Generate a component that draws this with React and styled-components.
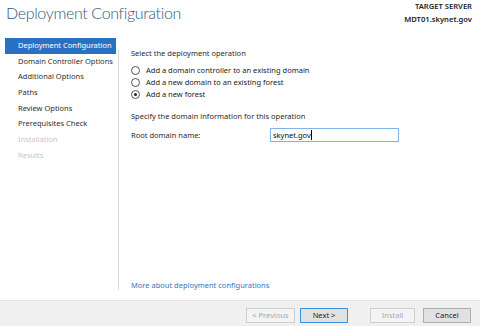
import React from 'react';
import styled, { createGlobalStyle } from 'styled-components';

const GlobalStyle = createGlobalStyle`
  html, body {
    margin: 0;
    padding: 0;
    background: #ffffff;
  }
  body {
    font-family: "Segoe UI", "Noto Sans", "Open Sans", sans-serif;
    font-size: 7.5px;
    line-height: 11px;
    color: #1f1f1f;
  }
`;

const Window = styled.div`
  width: 480px;
  height: 326px;
  display: flex;
  flex-direction: column;
  background: #ffffff;
  overflow: hidden;
`;

const Header = styled.header`
  height: 36px;
  display: flex;
  justify-content: space-between;
  align-items: flex-start;
  padding: 0 8px 0 6px;
`;

const Title = styled.h1`
  margin: 3px 0 0;
  font-family: "Lato", "Open Sans", sans-serif;
  font-weight: 300;
  font-size: 16px;
  letter-spacing: -0.35px;
  line-height: 20px;
  color: #2f5a7e;
`;

const Server = styled.div`
  margin-top: 0;
  text-align: right;
  font-size: 7.6px;
  font-weight: 600;
  line-height: 12.5px;
  color: #222;
`;

const Main = styled.main`
  flex: 1;
  display: flex;
  min-height: 0;
`;

const Nav = styled.nav`
  width: 111px;
  margin-left: 5px;
  padding-top: 2px;
  display: flex;
  flex-direction: column;
`;

const NavItem = styled.div`
  height: 15.7px;
  line-height: 15.7px;
  padding-left: 13px;
  white-space: nowrap;
  background: ${(p) => (p.$active ? '#2a72c1' : 'transparent')};
  color: ${(p) => (p.$active ? '#ffffff' : p.$disabled ? '#c6c6c6' : '#2e2e2e')};
`;

const Divider = styled.div`
  width: 1px;
  margin: 14px 0 10px 2px;
  background: #dadada;
`;

const Content = styled.section`
  flex: 1;
  display: flex;
  flex-direction: column;
  padding: 11.5px 0 9.5px 12px;
`;

const Label = styled.div`
  color: #2a2a2a;
`;

const RadioGroup = styled.div`
  display: flex;
  flex-direction: column;
  margin: 5.5px 0 10.5px;
`;

const RadioRow = styled.label`
  display: flex;
  align-items: center;
  height: 12px;
  color: #222;
`;

const Radio = styled.span`
  width: 7px;
  height: 7px;
  border: 1px solid #555;
  border-radius: 50%;
  margin-right: 6px;
  display: flex;
  align-items: center;
  justify-content: center;
  &::after {
    content: '';
    width: 3px;
    height: 3px;
    border-radius: 50%;
    background: ${(p) => (p.$checked ? '#202020' : 'transparent')};
  }
`;

const FieldRow = styled.div`
  display: flex;
  align-items: center;
  margin-top: 6.5px;
`;

const FieldLabel = styled.span`
  width: 139px;
  color: #2a2a2a;
`;

const Input = styled.div`
  width: 123px;
  height: 12px;
  border: 1px solid #7eb4ea;
  padding: 0 2px;
  line-height: 12px;
  color: #111;
  display: flex;
  align-items: center;
  &::after {
    content: '';
    width: 1px;
    height: 10px;
    background: #000;
  }
`;

const Link = styled.a`
  margin-top: auto;
  color: #2b78c2;
  text-decoration: none;
`;

const Footer = styled.footer`
  height: 26px;
  border-top: 1px solid #e3e3e3;
  background: #f0f0f0;
  display: flex;
  align-items: flex-start;
  justify-content: flex-end;
  padding: 7px 9px 0 0;
  box-sizing: border-box;
`;

const Button = styled.button`
  width: ${(p) => p.$w}px;
  height: 15px;
  padding: 0;
  margin-left: ${(p) => p.$ml || 0}px;
  font-family: inherit;
  font-size: 7.5px;
  line-height: 13px;
  white-space: nowrap;
  background: ${(p) => (p.$disabled ? '#f4f4f4' : '#e1e1e1')};
  color: ${(p) => (p.$disabled ? '#a8a8a8' : '#222')};
  border: 1px solid ${(p) => (p.$primary ? '#3c8fdc' : p.$disabled ? '#cfcfcf' : '#adadad')};
`;

const steps = [
  { label: 'Deployment Configuration', active: true },
  { label: 'Domain Controller Options' },
  { label: 'Additional Options' },
  { label: 'Paths' },
  { label: 'Review Options' },
  { label: 'Prerequisites Check' },
  { label: 'Installation', disabled: true },
  { label: 'Results', disabled: true },
];

const operations = [
  { label: 'Add a domain controller to an existing domain' },
  { label: 'Add a new domain to an existing forest' },
  { label: 'Add a new forest', checked: true },
];

const App = () => {
  return (
    <>
      <GlobalStyle />
      <Window>
        <Header>
          <Title>Deployment Configuration</Title>
          <Server>
            TARGET SERVER
            <br />
            MDT01.skynet.gov
          </Server>
        </Header>

        <Main>
          <Nav>
            {steps.map((s) => (
              <NavItem key={s.label} $active={s.active} $disabled={s.disabled}>
                {s.label}
              </NavItem>
            ))}
          </Nav>
          <Divider />
          <Content>
            <Label>Select the deployment operation</Label>
            <RadioGroup>
              {operations.map((o) => (
                <RadioRow key={o.label}>
                  <Radio $checked={o.checked} />
                  {o.label}
                </RadioRow>
              ))}
            </RadioGroup>
            <Label>Specify the domain information for this operation</Label>
            <FieldRow>
              <FieldLabel>Root domain name:</FieldLabel>
              <Input>skynet.gov</Input>
            </FieldRow>
            <Link href="#">More about deployment configurations</Link>
          </Content>
        </Main>

        <Footer>
          <Button $disabled $w={49}>&lt; Previous</Button>
          <Button $primary $w={48} $ml={5}>Next &gt;</Button>
          <Button $disabled $w={45} $ml={22}>Install</Button>
          <Button $w={48} $ml={8}>Cancel</Button>
        </Footer>
      </Window>
    </>
  );
};

export default App;
